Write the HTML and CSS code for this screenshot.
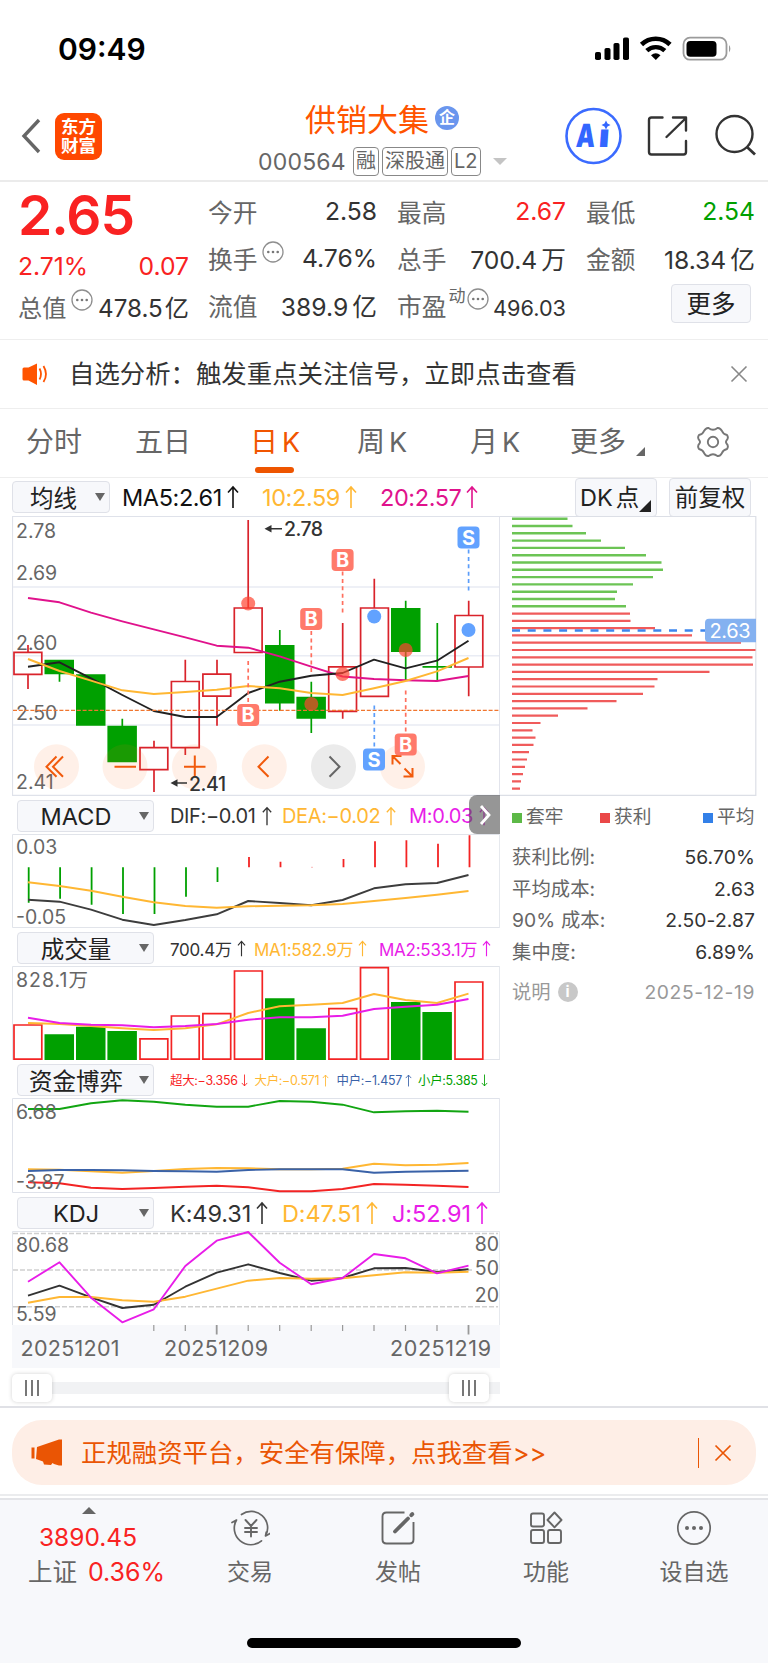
FILE: index.html
```html
<!DOCTYPE html>
<html lang="zh-CN">
<head>
  <meta charset="UTF-8">
  <meta name="viewport" content="width=device-width, initial-scale=1.0">
  <title>供销大集 000564</title>
  <link rel="stylesheet" href="styles.css">
</head>
<body>
  <svg class="defs" width="0" height="0">
    <symbol id="up" viewBox="0 0 12 24"><path d="M6 23V2M1 7.5L6 2l5 5.5" fill="none" stroke="currentColor" stroke-width="1.6"/></symbol>
    <symbol id="down" viewBox="0 0 12 24"><path d="M6 1v21M1 16.5L6 22l5-5.5" fill="none" stroke="currentColor" stroke-width="1.6"/></symbol>
    <symbol id="dots" viewBox="0 0 22 22"><circle cx="11" cy="11" r="10" fill="none" stroke="#8e8e8e" stroke-width="1.3"/><circle cx="6.3" cy="11" r="1.3" fill="#777"/><circle cx="11" cy="11" r="1.3" fill="#777"/><circle cx="15.7" cy="11" r="1.3" fill="#777"/></symbol>
  </svg>

  <!-- 状态栏 -->
  <div class="status">
    <span class="time">09:49</span>
    <svg class="status-icons" viewBox="594 32 140 32" width="140" height="32">
      <rect x="595" y="52" width="6" height="8" rx="1.8"/><rect x="604.500" y="48" width="6" height="12" rx="1.8"/><rect x="613.500" y="43" width="6" height="17" rx="1.8"/><rect x="623" y="37.500" width="6" height="22.500" rx="1.8"/>
      <path d="M641.500 44.500a20.500 20.500 0 0 1 28.500 0" fill="none" stroke="#000" stroke-width="4.600"/>
      <path d="M646.800 50.700a13 13 0 0 1 18 0" fill="none" stroke="#000" stroke-width="4.400"/>
      <path d="M651 55.300a7.500 7.500 0 0 1 9.500 0l-4.700 4.800z"/>
      <rect x="683.500" y="37.700" width="43" height="22" rx="6.500" fill="none" stroke="#9b9b9b" stroke-width="1.800"/>
      <rect x="686.500" y="41" width="30" height="15.800" rx="3.800"/><path d="M729 45q2.800 3.500 0 7.500z" fill="#9b9b9b"/>
    </svg>
  </div>

  <!-- 标题栏 -->
  <div class="header">
    <svg class="back" viewBox="0 0 24 38" width="24" height="38"><path d="M21 3L6 19l15 16" fill="none" stroke="#666" stroke-width="3.400"/></svg>
    <div class="logo">东方<br>财富</div>
    <div class="title">
      <div class="name">供销大集<span class="corp">企</span></div>
      <div class="code"><span class="num">000564</span><em>融</em><em>深股通</em><em>L2</em><b></b></div>
    </div>
    <div class="tools">
      <svg viewBox="563 107 58 58" width="58" height="58">
        <circle cx="592.500" cy="136" r="27" fill="#fff" stroke="#3b6bff" stroke-width="2.600"/>
        <g class="ai" transform="translate(592 146.500) skewX(-4)"><text x="-17.500" y="0" textLength="19" lengthAdjust="spacingAndGlyphs">A</text><text x="5" y="0" textLength="11" lengthAdjust="spacingAndGlyphs">ı</text></g>
        <path d="M605 120.500l1.500 3 3 1.500-3 1.500-1.500 3-1.500-3-3-1.500 3-1.500z" fill="#3366ff"/>
      </svg>
      <svg viewBox="646 114 44 44" width="44" height="44" fill="none" stroke="#333" stroke-width="2.400" stroke-linecap="round" stroke-linejoin="round"><path d="M662.500 117.500h-11q-2.500 0-2.500 2.500v32q0 2.500 2.500 2.500h32q2.500 0 2.500-2.500v-11M673 117.500h13v13M686 118l-19.500 19"/></svg>
      <svg viewBox="714 114 44 44" width="44" height="44"><circle cx="734.500" cy="134" r="18" fill="none" stroke="#333" stroke-width="2.400"/><path d="M747 147l8 7.500" stroke="#333" stroke-width="2.800"/></svg>
    </div>
  </div>

  <!-- 行情 -->
  <div class="quote">
    <div class="price">
      <div class="last">2.65</div>
      <div class="pair red"><span>2.71%</span><span>0.07</span></div>
      <div class="pair cap"><label>总值</label><svg class="tip" width="22" height="22"><use href="#dots"/></svg><span>478.5<i>亿</i></span></div>
    </div>
    <div class="cells">
      <div><label>今开</label><span>2.58</span></div>
      <div><label>最高</label><span class="red">2.67</span></div>
      <div><label>最低</label><span class="green">2.54</span></div>
      <div><label>换手</label><svg class="tip" width="22" height="22"><use href="#dots"/></svg><span>4.76%</span></div>
      <div><label>总手</label><span>700.4<i>万</i></span></div>
      <div><label>金额</label><span>18.34<i>亿</i></span></div>
      <div><label>流值</label><span>389.9<i>亿</i></span></div>
      <div><label>市盈</label><sup>动</sup><svg class="tip pe" width="22" height="22"><use href="#dots"/></svg><span class="small">496.03</span></div>
      <div><button class="more">更多</button></div>
    </div>
  </div>

  <div class="notice">
    <svg viewBox="21 360 30 26" width="30" height="26"><path d="M22.500 368q0-1.500 1.500-1.500h4.500l8.500-4v21.500l-8.500-4.500h-4.500q-1.500 0-1.500-1.500z" fill="#ff5400"/><path d="M39.500 367.500q3 5.500 0 11M43.500 365q5 8.500 0 16" fill="none" stroke="#ff5400" stroke-width="1.800"/></svg>
    <p>自选分析：触发重点关注信号，立即点击查看</p>
    <svg class="x" viewBox="0 0 18 18" width="18" height="18"><path d="M1.500 1.500l15 15M16.500 1.500l-15 15" stroke="#888" stroke-width="1.600"/></svg>
  </div>

  <div class="tabs">
    <span>分时</span><span>五日</span><span class="on">日<i>K</i></span><span>周<i>K</i></span><span>月<i>K</i></span><span>更多<b></b></span>
    <svg viewBox="-17 -17 34 34" width="34" height="34"><path d="M-4.500-14Q0-10.500 4.500-14Q7-14.500 9-11Q10-8 14-7Q16-4 13.500-1.500Q12.500 0 13.500 1.500Q16 4 14 7Q10 8 9 11Q7 14.500 4.500 14Q0 10.500-4.500 14Q-7 14.500-9 11Q-10 8-14 7Q-16 4-13.500 1.500Q-12.500 0-13.500-1.500Q-16-4-14-7Q-10-8-9-11Q-7-14.500-4.500-14Z" fill="none" stroke="#777" stroke-width="1.900"/><circle r="5.200" fill="none" stroke="#777" stroke-width="1.900"/></svg>
  </div>

  <div class="ma">
    <button class="pick">均线<b></b></button>
    <div class="vals">
      <span>MA5:2.61<svg><use href="#up"/></svg></span>
      <span class="gold">10:2.59<svg><use href="#up"/></svg></span>
      <span class="pink">20:2.57<svg><use href="#up"/></svg></span>
    </div>
    <button class="dk">DK<i>点</i><b></b></button>
    <button class="fq">前复权</button>
  </div>

  <div class="board">
    <div class="left">
      <!-- K线 -->
      <svg class="chart" viewBox="12 516 488 280" width="488" height="280">
        <path d="M12.500 795.300V516.500H499.700V795.300Z" fill="none" stroke="#dfe2ea" stroke-width="1.200"/>
        <path d="M13 587H499M13 655.700H499M13 725H499" stroke="#e9ecf4" stroke-width="1.600"/>
        <g class="axis">
          <text x="16" y="538">2.78</text><text x="16" y="580">2.69</text><text x="16" y="649.500">2.60</text><text x="16" y="720">2.50</text><text x="16" y="789">2.41</text>
        </g>
        <g fill="none" stroke="#d9232b" stroke-width="1.700">
          <path d="M28 645V652M28 674.300V689M154 740.700V747.700M154 769.700V792M185.300 659.700V681.300M185.300 747.700V755M217 659.700V674M217 696.300V725.700M248.200 520V608M342.700 623V666.700M342.700 711.300V718.700M374.300 578.700V608M468.700 600.700V615.300M468.700 667V696.300"/>
          <path d="M14 652.300h27.800v22h-27.800zM140 747.700h27.800v22h-27.800zM171.400 681.500h27.800v66.200h-27.800zM202.900 674.200h27.800v22h-27.800zM234.300 608h27.800v44.500h-27.800zM328.700 666.800h27.800v44.500h-27.800zM360.600 608h27.800v88.300h-27.800zM455 615.500h27.800v51.500h-27.800z"/>
        </g>
        <g fill="#00a000" stroke="#00a000">
          <path d="M44.500 659.700h29.500v14.600H44.500zM76 674.300h29.500v51.500H76zM107.400 725.700h29.500v36.600h-29.500zM265 645h29.500v58.400H265zM296.400 696.700h29.500v22h-29.500zM391 608h29.500v44H391z" stroke="none"/>
          <path d="M59.500 674V681.700M122.300 718.700V726M279.800 630V710.700M311.300 681.700V733M405.700 600.700V680M437.300 623V680.700M422.500 666.800H452" stroke-width="1.700"/>
        </g>
        <g fill="none" stroke-width="1.900" stroke-linejoin="round">
          <path stroke="#e0128c" d="M28 598L59.500 602.300 91 612.700 122.300 621.300 153.800 629.300 185.300 637.300 216.700 645.700 248.200 647.700 279.700 656.300 311.200 666.700 342.600 676.500 374 679 405.500 680.300 437 681 468.500 676"/>
          <path stroke="#222" d="M28 666.700L59.500 662.300 91 678.300 122.300 695 153.800 711 185.300 717 216.700 717 248.200 693 279.700 681.700 311.200 675.700 342.600 673 374 659.700 405.500 668.300 437 660.700 468.500 640.700"/>
          <path stroke="#ffb733" d="M28 659L59.500 671 91 680.700 122.300 690.300 153.800 694 185.300 692 216.700 689.700 248.200 686 279.700 688.300 311.200 693 342.600 695 374 688.300 405.500 681 437 671.300 468.500 658"/>
        </g>
        <path d="M13 710.400H499" stroke="#f0762f" stroke-width="1.400" stroke-dasharray="4 1.800"/>
        <!-- 图表操作按钮 -->
        <g fill="#ff6a1a" fill-opacity=".1"><circle cx="56.500" cy="766.700" r="22.500"/><circle cx="125" cy="766.700" r="22.500"/><circle cx="194.500" cy="766.700" r="22.500"/><circle cx="264.300" cy="766.700" r="22.500"/><circle cx="402.500" cy="766.700" r="22.500"/></g>
        <circle cx="333.500" cy="766.700" r="22.500" fill="#ebebeb"/>
        <g fill="none" stroke="#f15a0c" stroke-width="2">
          <path d="M56.500 756.500L46.500 766.700l10 10M63 756.500L53 766.700l10 10M114.500 766.700H136M184 766.700h21.500M194.800 755.500v21.500M268.500 756.500L258.500 766.700l10 10"/>
          <path d="M392.500 764.500v-8.500h9M392.500 756l8 8M412.500 768v8.500h-9M412.500 776.500l-8-8"/>
        </g>
        <path d="M329.500 756.500l10 10.200-10 10" fill="none" stroke="#666" stroke-width="2"/>
        <!-- 买卖点 -->
        <g stroke="#ff6f5e" stroke-width="1.700" stroke-dasharray="4 3.400"><path d="M248.200 661V704M311.300 631V674M342.600 571.500V614.500M405.700 690.500V733"/></g>
        <g stroke="#5b9dfa" stroke-width="1.700" stroke-dasharray="4 3.400"><path d="M374.300 705.500V748M468.600 549.500V592"/></g>
        <g fill="#ff4530" fill-opacity=".7"><circle cx="248.200" cy="603.500" r="7"/><circle cx="311.300" cy="704" r="7"/><circle cx="342.600" cy="674" r="7"/><circle cx="405.700" cy="650" r="7"/></g>
        <g fill="#62a2ff"><circle cx="374.200" cy="616.500" r="7"/><circle cx="468.500" cy="630" r="7"/></g>
        <g fill="#ff7a6b"><rect x="237.200" y="704" width="22" height="22" rx="4"/><rect x="300.200" y="608" width="22" height="22" rx="4"/><rect x="331.600" y="549" width="22" height="22" rx="4"/><rect x="394.700" y="733.500" width="22" height="22" rx="4"/></g>
        <g fill="#62a2ff"><rect x="363" y="748.500" width="22" height="22" rx="4"/><rect x="457.500" y="526.500" width="22" height="22" rx="4"/></g>
        <g class="mark"><text x="248.200" y="722">B</text><text x="311.200" y="626">B</text><text x="342.600" y="567">B</text><text x="405.700" y="751.500">B</text><text x="374" y="766.500">S</text><text x="468.500" y="544.500">S</text></g>
        <g class="peak"><text x="284" y="536" textLength="39">2.78</text><text x="189" y="790.500" textLength="37">2.41</text></g>
        <path d="M270 528.700H282M176 783H187" stroke="#333" stroke-width="1.600"/><path d="M264.500 528.700l7-3.700v7.400zM170.500 783l7-3.700v7.400z" fill="#333"/>
      </svg>

      <div class="head">
        <button class="pick">MACD<b></b></button>
        <div class="vals macd">
          <span>DIF:−0.01<svg><use href="#up"/></svg></span>
          <span class="gold">DEA:−0.02<svg><use href="#up"/></svg></span>
          <span class="mag">M:0.03<svg><use href="#up"/></svg></span>
        </div>
        <div class="fold"><svg viewBox="0 0 12 22" width="12" height="22"><path d="M2 2l8 9-8 9" fill="none" stroke="#fff" stroke-width="2.800"/></svg></div>
      </div>
      <svg class="chart" viewBox="12 834 488 94" width="488" height="94">
        <path d="M12.500 927.500V834.500H499.700V927.500Z" fill="none" stroke="#e1e4ea"/>
        <g class="axis"><text x="16" y="854">0.03</text><text x="16" y="923.500">-0.05</text></g>
        <path d="M28.700 867.300V902.700M60.100 867.300V898.700M91.600 867.300V904.700M123 867.300V914M154.500 867.300V914M186 867.300V896.700M217.500 867.300V882" stroke="#00a000" stroke-width="1.800"/>
        <path d="M249 867.300V857M280.500 867.300V861.700M343.500 867.300V859M375 867.300V841.300M406.400 867.300V840.300M438 867.300V843.700M469.500 867.300V835.300" stroke="#f32424" stroke-width="1.800"/>
        <path d="M311 867.300h2" stroke="#f9b8b8"/>
        <g fill="none" stroke-width="1.900" stroke-linejoin="round">
          <path stroke="#3d3d3d" d="M28 899.700L59.500 901.700 91 909.700 122.300 919.700 153.800 925 185.300 920 216.700 914.300 248.200 901 279.700 903 311.200 905.300 342.600 900 374 888.300 405.500 884.300 437 883 468.500 875"/>
          <path stroke="#ffb733" d="M28 882.300L59.500 886 91 890.700 122.300 896.700 153.800 902.300 185.300 906 216.700 907.700 248.200 906.300 279.700 905.700 311.200 905.300 342.600 904 374 901 405.500 898 437 894.700 468.500 891"/>
        </g>
      </svg>

      <div class="head">
        <button class="pick">成交量<b></b></button>
        <div class="vals vol">
          <span>700.4万<svg><use href="#up"/></svg></span>
          <span class="gold">MA1:582.9万<svg><use href="#up"/></svg></span>
          <span class="mag">MA2:533.1万<svg><use href="#up"/></svg></span>
        </div>
      </div>
      <svg class="chart" viewBox="12 966 488 94" width="488" height="94">
        <path d="M12.500 1060.500V966.500H499.700V1060.500" fill="none" stroke="#e1e4ea"/>
        <path d="M482 1059.500H499.500" stroke="#e1e4ea"/>
        <g class="axis"><text x="16" y="987" textLength="72">828.1万</text></g>
        <g fill="none" stroke="#f32424" stroke-width="1.700">
          <path d="M14 1025h27.800v34.200h-27.800zM140 1038.800h27.800v20.400h-27.800zM171.400 1016h27.800v43.200h-27.800zM202.900 1013.700h27.800v45.500h-27.800zM234.500 971h27.800v88.200h-27.800zM328.900 1008.700h27.800v50.500h-27.800zM360.500 967.600h27.800v91.600h-27.800zM455 982h27.800v77.200h-27.800z"/>
        </g>
        <path d="M44.500 1034.300h29.500v25.700H44.500zM76 1026.700h29.500v33.300H76zM107.400 1031h29.500v29h-29.500zM265 998.300h29.500v61.700H265zM296.400 1028.300h29.500v31.700h-29.500zM391 1002h29.500v58H391zM422.400 1012h29.500v48h-29.500z" fill="#00a000"/>
        <g fill="none" stroke-width="1.900" stroke-linejoin="round">
          <path stroke="#ffb733" d="M28 1023L59.500 1024 91 1026 122.300 1028.300 153.800 1030 185.300 1028.300 216.700 1024.300 248.200 1013 279.700 1006.300 311.200 1004.700 342.600 1003 374 994 405.500 1000 437 1003 468.500 993.700"/>
          <path stroke="#e81de8" d="M28 1017.700L59.500 1023 91 1024.700 122.300 1025.300 153.800 1027.300 185.300 1026 216.700 1024 248.200 1019.700 279.700 1017.300 311.200 1017.300 342.600 1015.700 374 1009 405.500 1006.700 437 1004.700 468.500 999"/>
        </g>
      </svg>

      <div class="head">
        <button class="pick">资金博弈<b></b></button>
        <div class="vals fund">
          <span class="red">超大:−3.356<svg><use href="#down"/></svg></span>
          <span class="gold">大户:−0.571<svg><use href="#up"/></svg></span>
          <span class="blue">中户:−1.457<svg><use href="#up"/></svg></span>
          <span class="green">小户:5.385<svg><use href="#down"/></svg></span>
        </div>
      </div>
      <svg class="chart" viewBox="12 1098 488 95" width="488" height="95">
        <path d="M12.500 1192.500V1098.500H499.700V1192.500Z" fill="none" stroke="#dfe2ea"/>
        <g fill="none" stroke-width="1.900" stroke-linejoin="round">
          <path stroke="#12a512" d="M28 1109L59.500 1109 91 1103.300 122.300 1100.300 153.800 1101.700 185.300 1104.700 216.700 1106.700 248.200 1106.700 279.700 1101 311.200 1101.700 342.600 1104.700 374 1112.300 405.500 1111.300 437 1110.700 468.500 1111.700"/>
          <path stroke="#ffb733" d="M28 1169.300L59.500 1169.700 91 1171.300 122.300 1172.700 153.800 1171 185.300 1169 216.700 1168 248.200 1168.300 279.700 1169.300 311.200 1169.300 342.600 1168.700 374 1163.700 405.500 1165.300 437 1164.700 468.500 1163"/>
          <path stroke="#3a62a8" d="M28 1171L59.500 1170 91 1170 122.300 1170.300 153.800 1171 185.300 1171.300 216.700 1171.700 248.200 1170 279.700 1169.300 311.200 1169.300 342.600 1169.300 374 1172.700 405.500 1171.700 437 1171.300 468.500 1170.700"/>
          <path stroke="#f32424" d="M28 1182.300L59.500 1183.300 91 1187.700 122.300 1189 153.800 1188 185.300 1186.700 216.700 1185.700 248.200 1187.300 279.700 1191.300 311.200 1191.300 342.600 1189 374 1184 405.500 1184.700 437 1185.700 468.500 1187"/>
        </g>
        <g class="axis"><text x="16" y="1119">6.68</text><text x="16" y="1188.500">-3.87</text></g>
      </svg>

      <div class="head">
        <button class="pick">KDJ<b></b></button>
        <div class="vals kdj">
          <span>K:49.31<svg><use href="#up"/></svg></span>
          <span class="gold">D:47.51<svg><use href="#up"/></svg></span>
          <span class="mag">J:52.91<svg><use href="#up"/></svg></span>
        </div>
      </div>
      <svg class="chart" viewBox="12 1231 488 137" width="488" height="137">
        <path d="M12.500 1325V1231.500H499.700V1325" fill="none" stroke="#e1e4ea"/>
        <path d="M13 1233.500H498M13 1270H472M13 1306.700H498" stroke="#cfcfcf" stroke-width="1.500" stroke-dasharray="5 2"/>
        <g class="axis"><text x="16" y="1251.500">80.68</text><text x="16" y="1320.500">5.59</text></g>
        <g class="axis end"><text x="499" y="1251">80</text><text x="499" y="1274.500">50</text><text x="499" y="1302">20</text></g>
        <g fill="none" stroke-width="1.900" stroke-linejoin="round">
          <path stroke="#333" d="M28 1295.700L59.500 1285.700 91 1297.300 122.300 1308 153.800 1304.700 185.300 1286.700 216.700 1272.700 248.200 1264.300 279.700 1273 311.200 1280.700 342.600 1278 374 1268.300 405.500 1268 437 1272 468.500 1269.300"/>
          <path stroke="#ffb733" d="M28 1302.700L59.500 1297 91 1297 122.300 1300.300 153.800 1301.700 185.300 1296.700 216.700 1288.700 248.200 1280.700 279.700 1278 311.200 1278.700 342.600 1278.300 374 1275.300 405.500 1272.300 437 1272.700 468.500 1271.700"/>
          <path stroke="#e81de8" d="M28 1281.700L59.500 1262.300 91 1297.700 122.300 1322.300 153.800 1309.300 185.300 1266 216.700 1240.700 248.200 1232 279.700 1262.700 311.200 1284.300 342.600 1278 374 1254 405.500 1258.300 437 1273.300 468.500 1265.700"/>
        </g>
        <rect x="12" y="1325" width="488" height="43" fill="#f7f8fb"/>
        <path d="M153.800 1325v6M185.300 1325v6M248.200 1325v6M279.700 1325v6M311.200 1325v6M342.600 1325v6M374 1325v6M405.500 1325v6M437 1325v6" stroke="#999" stroke-width="1.200"/>
        <path d="M216.700 1325v9.500M468.500 1325v9.500" stroke="#999" stroke-width="1.800"/>
        <g class="date"><text x="20.500" y="1356" textLength="99">20251201</text><text x="164" y="1356" textLength="104">20251209</text><text x="390" y="1356" textLength="101">20251219</text></g>
      </svg>

      <div class="range"><div class="grip"><i></i><i></i><i></i></div><div class="grip"><i></i><i></i><i></i></div></div>
    </div>

    <!-- 筹码分布 -->
    <div class="right">
      <svg class="chart" viewBox="500 516 257 280" width="257" height="280">
        <path d="M500 516.500H755.800V795.300H500" fill="none" stroke="#dcdfe6" stroke-width="1.200"/>
        <path d="M512 518.700h55.500M512 526h60.500M512 533.300h74M512 540.600h89M512 547.900h113M512 555.200h134M512 562.500h149.500M512 569.800h151M512 577.100h141M512 584.400h121M512 591.700h105M512 599h103M512 606.300h114" stroke="#6cc455" stroke-width="2.400"/>
        <path d="M512 613.600h118M512 620.900h118.500M512 628.100h143M512 635.400h180M512 642.700h229M512 650h243.500M512 657.300h240.500M512 664.600h241M512 671.900h197.500M512 679.200h145.500M512 686.500h142.500M512 693.800h131M512 701.100h104.500M512 708.400h75.500M512 715.700h46M512 723h28.500M512 730.300h20.500M512 737.600h23.500M512 744.900h21.500M512 752.200h17M512 759.500h15M512 766.800h13M512 774.100h11M512 781.400h9M512 788.700h8" stroke="#f05b5b" stroke-width="2.200"/>
        <path d="M512 630.500H706" stroke="#3d86ee" stroke-width="2.600" stroke-dasharray="8 7.700"/>
        <path d="M756 618.700h-47q-4 0-4 4v15.500q0 4 4 4h47z" fill="#84b1f0"/>
        <text class="avg" x="709.500" y="637.500" textLength="41">2.63</text>
      </svg>
      <div class="legend"><span class="lg">套牢</span><span class="lr">获利</span><span class="lb">平均</span></div>
      <dl>
        <dt>获利比例:</dt><dd>56.70%</dd>
        <dt>平均成本:</dt><dd>2.63</dd>
        <dt>90% 成本:</dt><dd>2.50-2.87</dd>
        <dt>集中度:</dt><dd>6.89%</dd>
      </dl>
      <div class="note"><span>说明</span><b>i</b><time>2025-12-19</time></div>
    </div>
  </div>

  <div class="promo">
    <div class="pill">
      <svg viewBox="30 1438 34 30" width="34" height="30"><path d="M31.500 1447.500h3v11h-3zM37 1447l22-7.500h3v26h-3l-5-1.500-1.500-1-1.500 2-7-.5-1-3-7-2.500z" fill="#ea5504"/></svg>
      <p>正规融资平台，安全有保障，点我查看&gt;&gt;</p>
      <i></i>
      <svg viewBox="0 0 18 18" width="18" height="18"><path d="M1.500 1.500l15 15M16.500 1.500l-15 15" stroke="#ea5504" stroke-width="1.700"/></svg>
    </div>
  </div>

  <div class="bottom">
    <div class="index"><b></b><div class="red">3890.45</div><div>上证<span class="red">0.36%</span></div></div>
    <div class="item">
      <svg viewBox="-21 -20 40 40" width="40" height="40" fill="none" stroke="#666" stroke-width="1.700" stroke-linecap="round" stroke-linejoin="round"><path d="M-9.500-13.500A16.500 16.500 0 0 1 14.500 8l4.500-2.500M14.500 8l.8-4"/><path d="M10.500 12.800A16.500 16.500 0 0 1-14.500-8l-4.500 2.500"/><path d="M-5.500-8L0-2 5.500-8M0-2V8.500M-6 0H6M-6 4H6" stroke-width="1.900"/></svg>
      <span>交易</span>
    </div>
    <div class="item">
      <svg viewBox="-20 -20 40 40" width="40" height="40" fill="none" stroke="#666" stroke-width="1.900"><path d="M6.500-15.500H-11.500Q-15.500-15.500-15.500-11.500V11.500Q-15.500 15.500-11.500 15.500H11.500Q15.500 15.500 15.500 11.500V-6"/><path d="M-3 3.500L10-9.500" stroke-width="3.800" stroke-linecap="round"/><path d="M13.300-12.800l1-1" stroke-width="4" stroke-linecap="round"/></svg>
      <span>发帖</span>
    </div>
    <div class="item">
      <svg viewBox="-20 -20 40 40" width="40" height="40" fill="none" stroke="#666" stroke-width="1.900"><rect x="-15" y="-14.500" width="13" height="13" rx="2"/><rect x="-15" y="2" width="13" height="13" rx="2"/><rect x="2" y="2" width="13" height="13" rx="2"/><path d="M8.500-15.500L15.500-8 8.500-.7 1.500-8z" stroke-linejoin="round"/></svg>
      <span>功能</span>
    </div>
    <div class="item">
      <svg viewBox="-20 -20 40 40" width="40" height="40"><circle r="16.200" fill="none" stroke="#666" stroke-width="1.700"/><circle cx="-7" r="2" fill="#666"/><circle r="2" fill="#666"/><circle cx="7" r="2" fill="#666"/></svg>
      <span>设自选</span>
    </div>
    <div class="home"></div>
  </div>
</body>
</html>
```

FILE: styles.css
```css
* {
  box-sizing: border-box;
}
body {
  margin: 0;
  width: 768px;
  height: 1663px;
  overflow: hidden;
  background: #fff;
  color: #333;
  font-family: Inter, "Noto Sans CJK SC", sans-serif;
}
svg {
  display: block;
  flex: none;
}
p, dl, dd {
  margin: 0;
}
em, i {
  font-style: normal;
}
button {
  font-family: inherit;
  color: #222;
  background: #f7f8fb;
  border: 1.5px solid #dfe1e8;
  border-radius: 4px;
  padding: 0;
  white-space: nowrap;
}
.defs {
  position: absolute;
}
.red {
  color: #f92222;
}
.green {
  color: #00a000;
}
.gold {
  color: #ffb733;
}
.pink {
  color: #e0128c;
}
.mag {
  color: #e81de8;
}
.blue {
  color: #3a62a8;
}

/* 状态栏 */
.status {
  height: 96px;
  display: flex;
  justify-content: space-between;
  padding: 32px 34px 0 58px;
}
.time {
  font-size: 30px;
  font-weight: 600;
  line-height: 34px;
  color: #000;
}

/* 标题栏 */
.header {
  height: 86px;
  display: flex;
  align-items: center;
  border-bottom: 2px solid #ebebeb;
  padding: 0 10px 4px 18px;
}
.back {
  margin-right: 13px;
}
.logo {
  width: 47px;
  height: 47px;
  border-radius: 9px;
  background: #ff4800;
  color: #fff;
  font-size: 17.5px;
  font-weight: 700;
  line-height: 19px;
  text-align: center;
  padding-top: 4px;
}
.title {
  flex: 1;
  height: 80px;
  padding-left: 156px;
}
.name {
  display: flex;
  align-items: center;
  height: 42px;
  padding: 1px 0 0 47px;
  font-size: 31px;
  color: #ff5400;
}
.corp {
  width: 24px;
  height: 24px;
  border-radius: 50%;
  background: #6a96ee;
  color: #fff;
  font-size: 16px;
  font-weight: 700;
  line-height: 23px;
  text-align: center;
  margin-left: 6px;
}
.code {
  display: flex;
  align-items: center;
  margin-top: 9px;
  height: 29px;
  font-size: 23px;
  color: #666;
}
.num {
  width: 95px;
  letter-spacing: .2px;
}
.code em {
  height: 29px;
  border: 1.5px solid #888;
  border-radius: 4px;
  font-size: 20px;
  line-height: 26px;
  padding: 0 2px;
  margin-right: 3px;
}
.code b {
  border: 7px solid transparent;
  border-top-color: #c4c4c4;
  border-bottom: 0;
  margin-left: 9px;
}
.tools {
  display: flex;
  align-items: center;
  gap: 24px;
}
.ai text {
  font-family: Inter, sans-serif;
  font-size: 32px;
  font-weight: 900;
  fill: #36f;
}

/* 行情 */
.quote {
  height: 158px;
  display: flex;
  border-bottom: 1.5px solid #eee;
  padding: 0 13px 0 18px;
  font-size: 24.7px;
}
.price {
  width: 171px;
}
.last {
  height: 63px;
  padding-top: 2px;
  font-size: 55px;
  font-weight: 600;
  line-height: 62px;
  color: #f92222;
  letter-spacing: -1px;
}
.pair {
  display: flex;
  justify-content: space-between;
  align-items: center;
  height: 42px;
}
.cap {
  margin-top: -2px;
  font-size: 24.2px;
}
.quote label {
  color: #666;
}
.cells {
  margin-left: 19px;
  display: grid;
  grid-template-columns: 169px 169px 169px;
  column-gap: 20px;
  grid-template-rows: 47.3px 47.3px 47.3px;
  padding-top: 5px;
}
.cells > div {
  display: flex;
  align-items: center;
  white-space: nowrap;
}
.cells span {
  margin-left: auto;
}
.cells span i {
  margin-left: 4px;
}
.cap i {
  margin-left: 2px;
}
.tip {
  margin: -12px 0 0 5px;
}
.cap .tip {
  margin: -12px 0 0 0;
}
.cells sup {
  font-size: 17px;
  line-height: 20px;
  margin: -19px 0 0 2px;
  color: #666;
}
.cells .pe {
  margin-left: 2px;
}
.cells .small {
  font-size: 21.7px;
  padding-top: 5px;
}
.more {
  width: 80px;
  height: 39px;
  font-size: 24.5px;
  line-height: 34px;
  margin-left: 85px;
  margin-top: -3px;
}

.notice {
  height: 69px;
  display: flex;
  align-items: center;
  border-bottom: 1.5px solid #eee;
  padding: 0 20px 0 21px;
}
.notice p {
  margin-left: 18px;
  font-size: 25.4px;
  line-height: 30px;
}
.notice .x {
  margin-left: auto;
}

/* 周期 */
.tabs {
  position: relative;
  height: 69px;
  display: grid;
  grid-template-columns: 109px 115px 107px 113px 100px 154px 34px;
  align-items: center;
  padding-left: 26px;
  border-bottom: 1.5px solid #eee;
  font-size: 28px;
  color: #666;
}
.tabs > svg {
  margin: -3px 0 0 -28px;
}
.tabs span {
  position: relative;
  line-height: 66px;
  top: -1px;
}
.tabs span i {
  margin-left: 4px;
  font-size: 27px;
}
.tabs .on {
  color: #f15500;
}
.tabs .on::after {
  content: "";
  position: absolute;
  left: 5px;
  bottom: 3px;
  width: 39px;
  height: 6px;
  border-radius: 3px;
  background: #ee5500;
}
.tabs b, .dk b {
  display: inline-block;
  border-left: 9px solid transparent;
  border-bottom: 9px solid #666;
  margin-left: 10px;
  vertical-align: -4px;
}

/* 均线 */
.ma {
  height: 38px;
  display: flex;
  padding-left: 12px;
}
.pick {
  display: flex;
  align-items: center;
  font-size: 23.5px;
}
.pick b {
  border: 5px solid transparent;
  border-top: 8px solid #666;
  border-bottom: 0;
}
.ma .pick {
  width: 98px;
  height: 32px;
  margin-top: 3px;
  padding-left: 17px;
  justify-content: space-between;
  padding-right: 4px;
}
.vals span {
  display: flex;
  align-items: center;
  white-space: nowrap;
}
.vals svg {
  width: 12px;
  height: 24px;
  margin-left: 5px;
}
.ma .vals {
  width: 453px;
  display: grid;
  grid-template-columns: 140px 118px 120px;
  padding-left: 12px;
  font-size: 23.5px;
  letter-spacing: -.4px;
  color: #111;
}
.ma .vals .gold {
  color: #ffb733;
}
.ma .vals .pink {
  color: #e0128c;
}
.dk, .fq {
  height: 39px;
  width: 82px;
  font-size: 23.5px;
  line-height: 34px;
}
.dk {
  margin: 0 12px;
  text-align: left;
  padding-left: 4px;
}
.dk i {
  margin-left: 3px;
}
.dk b {
  border-left-width: 12px;
  border-bottom: 12px solid #222;
  margin-left: 0;
  vertical-align: -6px;
}

/* 图表 */
.board {
  display: flex;
  height: 892px;
  padding-left: 12px;
  border-bottom: 2px solid #e0e1e6;
}
.left {
  width: 488px;
}
.chart text {
  font-family: Inter, "Noto Sans CJK SC", sans-serif;
}
.axis text {
  font-size: 19.5px;
  fill: #666;
}
.end text {
  text-anchor: end;
}
.mark text {
  font-size: 20px;
  font-weight: 700;
  fill: #fff;
  text-anchor: middle;
}
.peak text {
  font-size: 19.5px;
  font-weight: 500;
  fill: #333;
}
.date text {
  font-size: 21.5px;
  fill: #666;
}
.chart .avg {
  font-size: 20px;
  fill: #fff;
}
.head {
  position: relative;
  height: 38px;
  display: flex;
  padding: 4px 0 0 5px;
}
.head .pick {
  width: 137px;
  height: 32px;
  position: relative;
  justify-content: center;
  padding-right: 19px;
}
.head .pick b {
  position: absolute;
  right: 4px;
}
.head .vals {
  display: grid;
  height: 32px;
  padding-left: 16px;
}
.macd {
  grid-template-columns: 112px 127px 90px;
  font-size: 20px;
  letter-spacing: -.35px;
}
.vol {
  grid-template-columns: 84px 125px 118px;
  font-size: 17px;
  letter-spacing: -.25px;
}
.fund {
  grid-template-columns: 84.5px 82px 81.5px 80px;
  font-size: 12.4px;
  letter-spacing: -.25px;
}
.kdj {
  grid-template-columns: 112px 110px 108px;
  font-size: 23.5px;
  letter-spacing: -.1px;
}
.head .macd svg {
  height: 20px;
}
.head .vol svg {
  height: 17px;
  width: 9px;
}
.head .fund svg {
  height: 13px;
  width: 7px;
  margin-left: 3px;
}
.fold {
  position: absolute;
  right: 0;
  top: -1px;
  width: 31px;
  height: 39px;
  border-radius: 8px 0 0 8px;
  background: rgba(80, 80, 80, .6);
  display: flex;
  align-items: center;
  justify-content: center;
}
.range {
  margin-top: 5px;
  height: 30px;
  display: flex;
  align-items: center;
  justify-content: space-between;
  padding-right: 11px;
  background: linear-gradient(#f1f2f4, #f1f2f4) 0 9px / 488px 12px no-repeat;
}
.grip {
  width: 40px;
  height: 28px;
  border-radius: 5px;
  background: #fff;
  box-shadow: 0 0 4px rgba(0, 0, 0, .18);
  display: flex;
  align-items: center;
  justify-content: center;
  gap: 4px;
}
.grip i {
  width: 2px;
  height: 16px;
  background: #777;
}

/* 筹码 */
.legend {
  display: grid;
  grid-template-columns: 88px 103px auto;
  margin: 7px 0 0 12px;
  font-size: 18.7px;
  line-height: 28px;
  color: #666;
}
.legend span::before {
  content: "";
  display: inline-block;
  width: 10px;
  height: 10px;
  margin-right: 4px;
}
.lg::before {
  background: #5db947;
}
.lr::before {
  background: #ea4848;
}
.lb::before {
  background: #3380e8;
}
.right dl {
  display: grid;
  grid-template-columns: 1fr auto;
  width: 243px;
  margin: 11px 0 0 12px;
  font-size: 19.3px;
  line-height: 31.6px;
  letter-spacing: .1px;
}
.right dt {
  color: #666;
}
.right dd {
  text-align: right;
}
.note {
  display: flex;
  align-items: center;
  width: 243px;
  margin: 10px 0 0 12px;
  font-size: 19.3px;
  line-height: 28px;
  color: #999;
}
.note b {
  width: 20px;
  height: 20px;
  border-radius: 50%;
  background: #c8c8c8;
  color: #fff;
  font-size: 15px;
  line-height: 20px;
  text-align: center;
  margin-left: 7px;
}
.note time {
  margin-left: auto;
  letter-spacing: .6px;
}

/* 广告条 */
.promo {
  height: 88px;
  padding: 12px 12px 0;
  border-bottom: 2px solid #ebecee;
}
.pill {
  height: 65px;
  border-radius: 30px;
  background: #feeee6;
  color: #ea5504;
  display: flex;
  align-items: center;
  padding: 0 24px 0 18px;
}
.pill p {
  margin-left: 17px;
  font-size: 25.4px;
  line-height: 30px;
}
.pill i {
  margin: 0 15px 0 auto;
  width: 1.5px;
  height: 30px;
  background: #ea5504;
}

/* 底部导航 */
.bottom {
  position: relative;
  height: 167px;
  margin-top: 2px;
  background: #f7f8fb;
  border-top: 2px solid #e3e4e8;
  display: grid;
  grid-template-columns: 176px 148px 148px 148px 148px;
  font-size: 23px;
  color: #666;
}
.index {
  display: flex;
  flex-direction: column;
  align-items: center;
  padding: 7px 0 0 17px;
  line-height: 34.5px;
  font-size: 24.5px;
}
.index b {
  border: 7px solid transparent;
  border-bottom-color: #666;
  border-top: 0;
  margin: 0 0 6px -16px;
}
.index b + .red {
  margin-left: -17px;
}
.index span {
  margin-left: 11px;
  font-size: 25px;
}
.item {
  display: flex;
  flex-direction: column;
  align-items: center;
  padding-top: 8px;
}
.item span {
  margin-top: 8px;
  line-height: 32px;
}
.home {
  position: absolute;
  left: 247px;
  bottom: 17px;
  width: 274px;
  height: 10px;
  border-radius: 5px;
  background: #000;
}
```
